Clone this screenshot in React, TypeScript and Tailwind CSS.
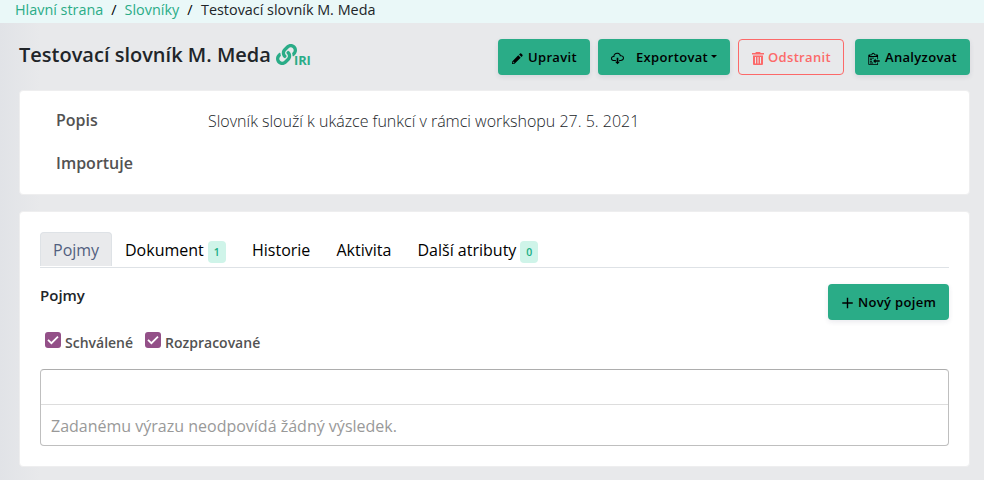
import React from "react";
import { FaLink } from "react-icons/fa";

const paths = {
  pencil:
    "M0 12v3h3l8-8-3-3-8 8zm3 2H1v-2h1v1h1v1zm10.3-9.3L12 6 9 3l1.3-1.3a.996.996 0 0 1 1.41 0l1.59 1.59c.39.39.39 1.02 0 1.41z",
  cloud:
    "M9 12h2l-3 3-3-3h2V7h2v5zm3-8c0-.44-.91-3-4.5-3C5.08 1 3 2.92 3 5 1.02 5 0 6.52 0 8c0 1.53 1 3 3 3h3V9.7H3C1.38 9.7 1.3 8.28 1.3 8c0-.17.05-1.7 1.7-1.7h1.3V5c0-1.39 1.56-2.7 3.2-2.7 2.55 0 3.13 1.55 3.2 1.8v1.2H12c.81 0 2.7.22 2.7 2.2 0 2.09-2.25 2.2-2.7 2.2h-2V11h2c2.08 0 4-1.16 4-3.5C16 5.06 14.08 4 12 4z",
  clippy:
    "M2 13h4v1H2v-1zm5-6H2v1h5V7zm2 3V8l-3 3 3 3v-2h5v-2H9zM4.5 9H2v1h2.5V9zM2 12h2.5v-1H2v1zm9 1h1v2c-.02.28-.11.52-.3.7-.19.18-.42.28-.7.3H1c-.55 0-1-.45-1-1V4c0-.55.45-1 1-1h3c0-1.11.89-2 2-2 1.11 0 2 .89 2 2h3c.55 0 1 .45 1 1v5h-1V6H1v9h10v-2zM2 5h8c0-.55-.45-1-1-1H8c-.55 0-1-.45-1-1s-.45-1-1-1-1 .45-1 1-.45 1-1 1H3c-.55 0-1 .45-1 1z",
  plus: "M12 8.8H6.8V14H5.2V8.8H0V7.2h5.2V2h1.6v5.2H12v1.6z",
};

function Icon({ name, w, className = "" }: { name: keyof typeof paths; w: number; className?: string }) {
  return (
    <svg viewBox={`0 0 ${w} 16`} className={`shrink-0 fill-current ${className}`}>
      <path d={paths[name]} />
    </svg>
  );
}

function TrashIcon() {
  return (
    <svg viewBox="0 0 12 13" className="mt-px h-[13px] w-3 shrink-0 fill-current">
      <path d="M3.6 0h4.8v1H12v1.6H0V1h3.6z" />
      <path
        fillRule="evenodd"
        d="M1 3.5h10V12a1 1 0 0 1-1 1H2a1 1 0 0 1-1-1zM3 5v6.5h1V5zM5.5 5v6.5h1V5zM8 5v6.5h1V5z"
      />
    </svg>
  );
}

const btn =
  "flex h-9 items-center rounded bg-[#2aac87] pt-px text-[13px] font-semibold tracking-[0.325px] whitespace-nowrap text-black shadow-[0_2px_5px_rgba(50,50,93,0.1)]";

function Badge({ children }: { children: React.ReactNode }) {
  return (
    <span className="mt-1 ml-1 flex h-[22px] w-[18px] items-center justify-center rounded bg-[#cff4e9] text-[10.5px] leading-none font-semibold text-[#1aae83]">
      {children}
    </span>
  );
}

function Check({ label, className = "" }: { label: string; className?: string }) {
  return (
    <label className={`flex items-start ${className}`}>
      <span className="flex h-4 w-4 items-center justify-center rounded-[3px] bg-[#935088]">
        <svg viewBox="0 0 16 16" className="h-4 w-4">
          <path d="M3 7.9 6.4 11.2 13 4.7" fill="none" stroke="white" strokeWidth="1.8" />
        </svg>
      </span>
      <span className="ml-1 text-[14px] leading-[22px] font-semibold text-[#525252]">{label}</span>
    </label>
  );
}

export default function App() {
  return (
    <div className="h-[480px] w-[984px] overflow-hidden bg-[linear-gradient(to_right,#e1e3e7_0px,#e8e9eb_40px)] font-['Open_Sans',sans-serif]">
      <nav className="flex h-[23px] items-start bg-[#eaf8f8] pl-[15px] text-[14.4px] leading-[20px] text-[#212529]">
        <span className="text-[#2aac87]">Hlavní strana</span>
        <span className="px-2 text-black">/</span>
        <span className="text-[#2aac87]">Slovníky</span>
        <span className="pr-[8.5px] pl-2 text-black">/</span>
        <span>Testovací slovník M. Meda</span>
      </nav>

      <header className="flex h-[67px] items-start pt-4 pr-[14px] pl-[19px]">
        <h1 className="text-[20px] leading-[32px] font-semibold whitespace-nowrap text-[#212529]">
          Testovací slovník M. Meda
        </h1>
        <div className="ml-[5px] flex pt-[5px] text-[#2aac87]">
          <FaLink className="h-[21px] w-[21px]" />
          <span className="mt-[6px] -ml-[3px] text-[12.8px] leading-5 font-bold">IRI</span>
        </div>
        <div className="ml-auto flex">
          <button className={`${btn} w-[92px] pl-[14px]`}>
            <Icon name="pencil" w={14} className="mt-px h-[13px] w-[11px]" />
            <span className="ml-[5px]">Upravit</span>
          </button>
          <button className={`${btn} ml-2 w-[132px] pl-[13px]`}>
            <Icon name="cloud" w={16} className="mt-px h-[13px] w-[13px]" />
            <span className="ml-3">Exportovat</span>
            <span className="mb-0.5 ml-[3px] border-x-[3px] border-t-[3px] border-x-transparent border-t-black" />
          </button>
          <button className="ml-2 flex h-9 w-[106px] items-center rounded border border-[#fc6969] pt-px pl-[13px] text-[13px] font-semibold tracking-[0.325px] text-[#fc6969]">
            <TrashIcon />
            <span className="ml-1">Odstranit</span>
          </button>
          <button className={`${btn} ml-[11px] w-[115px] pl-[13px]`}>
            <Icon name="clippy" w={14} className="mt-px h-[13px] w-3" />
            <span className="ml-[5px]">Analyzovat</span>
          </button>
        </div>
      </header>

      <section className="mr-[14px] ml-[19px] h-[105px] rounded border border-[#eeeeef] bg-white pt-[18px] pl-9 text-[16px]">
        <div className="flex h-[43px]">
          <span className="w-[152px] leading-[22px] font-semibold text-[#525252]">Popis</span>
          <span className="leading-6 font-light text-[#212529]">
            Slovník slouží k ukázce funkcí v rámci workshopu 27. 5. 2021
          </span>
        </div>
        <div className="leading-[22px] font-semibold text-[#525252]">Importuje</div>
      </section>

      <section className="mt-4 mr-[14px] ml-[19px] h-[256px] rounded border border-[#eeeeef] bg-white px-5 pt-5">
        <div className="flex h-9 items-start border-b border-[#dee2e6] text-[16px] text-black">
          <div className="h-[34px] w-[72px] rounded-t border border-b-0 border-[#dee2e6] bg-[#e9eaec] pl-3 leading-[34px] text-[#525f7f]">
            Pojmy
          </div>
          <div className="ml-[13px] flex h-9 w-[127px] items-center">
            Dokument <Badge>1</Badge>
          </div>
          <div className="w-[84.5px] leading-9">Historie</div>
          <div className="w-[81px] leading-9">Aktivita</div>
          <div className="flex h-9 items-center">
            Další atributy <Badge>0</Badge>
          </div>
        </div>
        <div className="mt-4 flex h-12 justify-between">
          <h2 className="text-[15px] leading-[22px] font-semibold text-[#212529]">Pojmy</h2>
          <button className={`${btn} w-[121px] pl-[14px]`}>
            <Icon name="plus" w={12} className="mt-px h-[14px] w-[11px]" />
            <span className="ml-[5px]">Nový pojem</span>
          </button>
        </div>
        <div className="flex h-[37px] pl-[5px]">
          <Check label="Schválené" />
          <Check label="Rozpracované" className="ml-3" />
        </div>
        <div className="h-[77px] rounded border border-[#bfbfbf] border-t-[#adadad]">
          <div className="h-[35px] border-b border-[#dddddd]" />
          <div className="pl-2.5 text-[16px] leading-[42px] text-[#999999]">
            Zadanému výrazu neodpovídá žádný výsledek.
          </div>
        </div>
      </section>
    </div>
  );
}
